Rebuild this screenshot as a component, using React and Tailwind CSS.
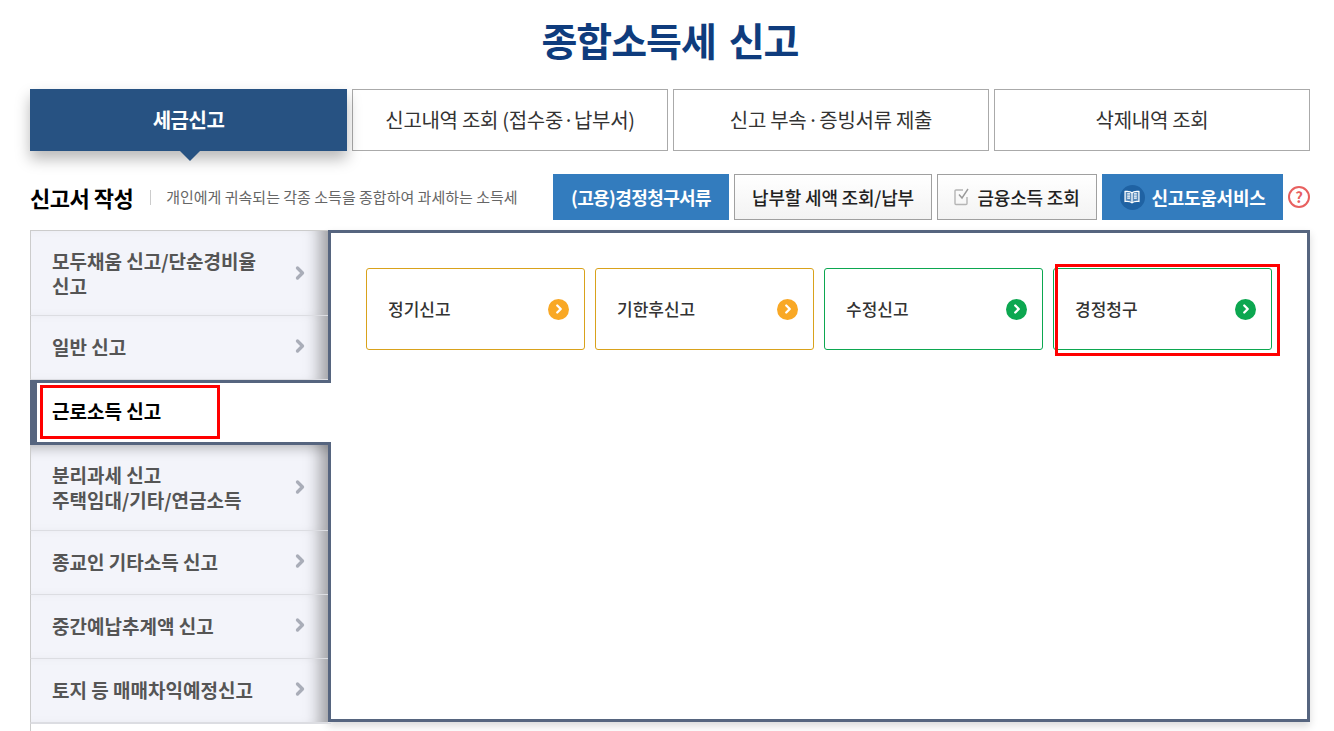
import React from "react";
import { ChevronRight } from "lucide-react";

const tabs = [
  <>신고내역 조회 (접수중·납부서)</>,
  <>신고 부속<span className="px-[1px]">·</span>증빙서류 제출</>,
  "삭제내역 조회",
];

const menus = [
  { label: ["모두채움 신고/단순경비율", "신고"], height: "h-[86px] pb-[1px]" },
  { label: ["일반 신고"], height: "h-[64px] pb-[3px]" },
  { label: ["근로소득 신고"], active: true },
  { label: ["분리과세 신고", "주택임대/기타/연금소득"], height: "h-[86px] pb-[1px]", shadow: "shadow-[inset_-20px_0_16px_-12px_rgba(0,0,0,0.35),inset_0_14px_12px_-10px_rgba(0,0,0,0.22)]" },
  { label: ["종교인 기타소득 신고"], height: "h-[64px] pb-[3px]" },
  { label: ["중간예납추계액 신고"], height: "h-[64px] pb-[3px]" },
  { label: ["토지 등 매매차익예정신고"], height: "h-[64px] pb-[3px]" },
];

const cards = [
  { label: "정기신고", border: "border-[#d9a21b]", dot: "bg-[#f9a825]" },
  { label: "기한후신고", border: "border-[#d9a21b]", dot: "bg-[#f9a825]" },
  { label: "수정신고", border: "border-[#0ca750]", dot: "bg-[#0ca750]" },
  { label: "경정청구", border: "border-[#0ca750]", dot: "bg-[#0ca750]", marked: true },
];

function BookIcon() {
  return (
    <span className="flex h-[25px] w-[25px] shrink-0 items-center justify-center rounded-full bg-[#1f62a3]">
      <svg width="16" height="14" viewBox="0 0 15 13" fill="none" stroke="#ffffff" strokeWidth="1.2">
        <path d="M7.5 2.5C6 1.2 3.5 1 1 1.3v9.4c2.5-.3 5 0 6.5 1.3 1.5-1.3 4-1.6 6.5-1.3V1.3C11.5 1 9 1.2 7.5 2.5z" fill="#ffffff" fillOpacity="0.25" />
        <path d="M7.5 2.5V12M3 3.6h2.7M3 5.6h2.7M3 7.6h2.7M9.3 3.6H12M9.3 5.6H12M9.3 7.6H12" />
      </svg>
    </span>
  );
}

function CheckIcon() {
  return (
    <svg width="17" height="18" viewBox="0 0 17 18" fill="none">
      <path d="M13 9v6.5a1 1 0 0 1-1 1H2a1 1 0 0 1-1-1V3a1 1 0 0 1 1-1h7" stroke="#b5b5b5" strokeWidth="1.4" />
      <path d="M5 6.5l3 3.5 6-9" stroke="#9a9a9a" strokeWidth="1.4" />
    </svg>
  );
}

function Toolbar() {
  const plain = "flex h-[46px] items-center justify-center border border-[#a0a0a0] bg-gradient-to-b from-white to-[#f3f3f3] text-[18px] font-medium tracking-[-0.2px] text-[#222]";
  const blue = "flex h-[46px] items-center justify-center bg-[#337cbe] text-[18px] font-bold text-white";
  return (
    <div className="flex items-center gap-[5px]">
      <button className={`${blue} w-[176px] tracking-[-0.6px]`}>(고용)경정청구서류</button>
      <button className={`${plain} w-[198px]`}>납부할 세액 조회/납부</button>
      <button className={`${plain} w-[160px] gap-[6px]`}>
        <CheckIcon />
        금융소득 조회
      </button>
      <button className={`${blue} w-[181px] gap-[7px] tracking-[-0.3px]`}>
        <BookIcon />
        신고도움서비스
      </button>
      <span className="flex h-[22px] w-[22px] items-center justify-center rounded-full border-2 border-[#e8605f] text-[15px] font-bold text-[#e8605f]">
        ?
      </span>
    </div>
  );
}

function Sidebar() {
  return (
    <div className="relative z-10 flex w-[301px] shrink-0 flex-col">
      {menus.map((m) =>
        m.active ? (
          <div
            key={m.label[0]}
            className="relative flex h-[65px] items-center border-y-[3px] border-l-[7px] border-[#56657f] bg-white pb-[2px] pl-[15px] text-[19px] font-bold text-black"
          >
            {m.label[0]}
            <span className="absolute left-[3px] top-[2px] h-[54px] w-[180px] border-[3px] border-[#ff0000]" />
          </div>
        ) : (
          <div
            key={m.label[0]}
            className={`${m.height} ${m.shadow || "shadow-[inset_-20px_0_16px_-12px_rgba(0,0,0,0.35)]"} mr-[3px] flex items-center justify-between border-b border-l border-b-[#dcdde2] border-l-[#cccccc] bg-[#f3f4fa] pl-[21px] pr-[18px] text-[19px] font-semibold leading-[25px] text-[#555555] first:border-t first:border-t-[#cccccc]`}
          >
            <div>
              {m.label.map((line) => (
                <div key={line}>{line}</div>
              ))}
            </div>
            <ChevronRight size={20} strokeWidth={4} className="shrink-0 text-[#a9adb8]" />
          </div>
        )
      )}
      <div className="h-[10px] border-l border-t border-l-[#cccccc] border-t-[#dcdde2]" />
    </div>
  );
}

function Panel() {
  return (
    <div className="ml-[-3px] h-[492px] flex-1 border-[3px] border-[#56657f] bg-white pl-[35px] pt-[35px] shadow-[0_4px_8px_rgba(0,0,0,0.15)]">
      <div className="flex gap-[10px]">
        {cards.map((c) => (
          <div
            key={c.label}
            className={`relative flex h-[82px] w-[219px] items-center justify-between rounded-[3px] border ${c.border} pl-[21px] pr-[15px] text-[17px] font-medium text-[#333]`}
          >
            {c.label}
            <span className={`flex h-[21px] w-[21px] items-center justify-center rounded-full ${c.dot}`}>
              <ChevronRight size={14} strokeWidth={4} className="text-white" />
            </span>
            {c.marked && (
              <span className="absolute left-[1px] top-[-5px] h-[92px] w-[225px] border-[3px] border-[#ff0000]" />
            )}
          </div>
        ))}
      </div>
    </div>
  );
}

export default function App() {
  return (
    <div className="h-[731px] w-[1334px] overflow-hidden bg-white pl-[30px] pr-[24px] font-['Noto_Sans_CJK_KR',sans-serif]">
      <h1 className="flex h-[89px] items-center justify-center pb-[11px] text-[39px] font-bold tracking-[-1px] text-[#0f3c7d] [word-spacing:5px]">
        종합소득세 신고
      </h1>

      <div className="flex gap-[5px]">
        <div className="relative flex h-[62px] w-[317px] items-center justify-center bg-[#275282] text-[20px] font-bold tracking-[-0.5px] text-white shadow-[0_8px_14px_rgba(0,0,0,0.28)]">
          세금신고
          <span className="absolute left-[150px] top-[62px] border-x-[10px] border-t-[10px] border-x-transparent border-t-[#275282]" />
        </div>
        {tabs.map((t, i) => (
          <div
            key={i}
            className="flex h-[62px] w-[316px] items-center justify-center border border-[#aaaaaa] text-[20px] tracking-[-0.3px] text-[#333]"
          >
            {t}
          </div>
        ))}
      </div>

      <div className="mt-[23px] flex h-[46px] items-center justify-between">
        <div className="flex items-center">
          <h2 className="text-[22px] font-bold tracking-[-0.5px] text-black">신고서 작성</h2>
          <span className="ml-[17px] mr-[15px] h-[15px] w-px bg-[#cccccc]" />
          <p className="text-[15px] text-[#666]">개인에게 귀속되는 각종 소득을 종합하여 과세하는 소득세</p>
        </div>
        <Toolbar />
      </div>

      <div className="mt-[10px] flex">
        <Sidebar />
        <Panel />
      </div>
    </div>
  );
}
